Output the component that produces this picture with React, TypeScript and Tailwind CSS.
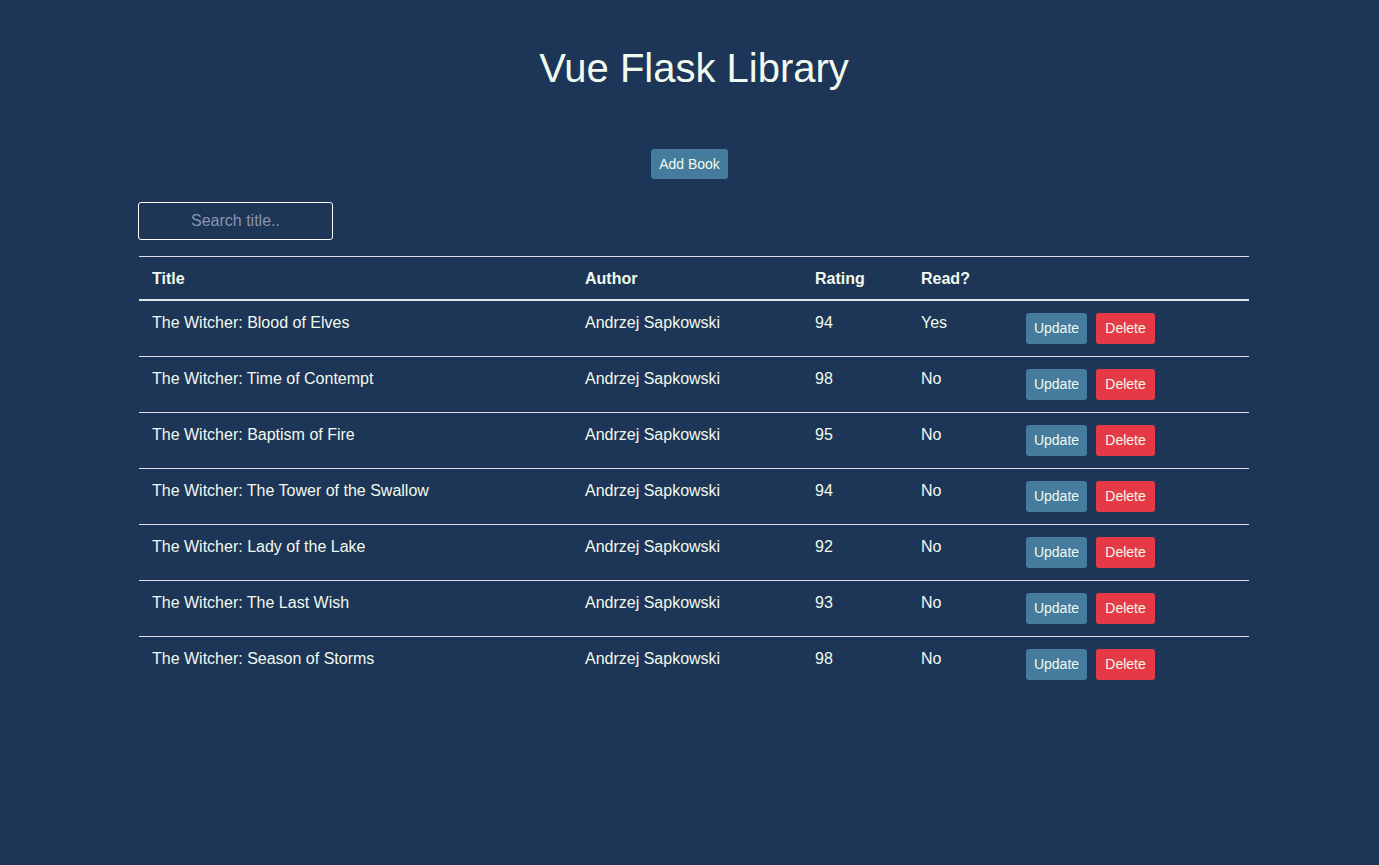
import React from "react";

interface Book {
  title: string;
  author: string;
  rating: number;
  read: boolean;
}

const books: Book[] = [
  { title: "The Witcher: Blood of Elves", author: "Andrzej Sapkowski", rating: 94, read: true },
  { title: "The Witcher: Time of Contempt", author: "Andrzej Sapkowski", rating: 98, read: false },
  { title: "The Witcher: Baptism of Fire", author: "Andrzej Sapkowski", rating: 95, read: false },
  { title: "The Witcher: The Tower of the Swallow", author: "Andrzej Sapkowski", rating: 94, read: false },
  { title: "The Witcher: Lady of the Lake", author: "Andrzej Sapkowski", rating: 92, read: false },
  { title: "The Witcher: The Last Wish", author: "Andrzej Sapkowski", rating: 93, read: false },
  { title: "The Witcher: Season of Storms", author: "Andrzej Sapkowski", rating: 98, read: false },
];

function BookRow({ book, last }: { book: Book; last: boolean }) {
  return (
    <div
      className={`flex h-[56px] text-[16px] leading-[19px] ${
        last ? "" : "border-b border-[#dee2e6]"
      }`}
    >
      <div className="w-[434px] pl-[13px] pt-[12px]">{book.title}</div>
      <div className="w-[230px] pl-[12px] pt-[12px]">{book.author}</div>
      <div className="w-[106px] pl-[12px] pt-[12px]">{book.rating}</div>
      <div className="w-[105px] pl-[12px] pt-[12px]">{book.read ? "Yes" : "No"}</div>
      <div className="flex-1 pl-[12px] pt-[12px] flex items-start gap-[9px]">
        <button className="h-[31px] w-[61px] rounded-[3px] bg-[#457b9d] text-[14px] text-[#f1faee]">
          Update
        </button>
        <button className="h-[31px] w-[59px] rounded-[3px] bg-[#e63946] text-[14px] text-[#f1faee]">
          Delete
        </button>
      </div>
    </div>
  );
}

export default function App() {
  return (
    <div
      className="min-h-screen bg-[#1d3557] text-[#f1faee]"
      style={{ fontFamily: '"Liberation Sans", Arial, sans-serif' }}
    >
      <div className="w-[1110px] ml-[139px] pt-[44px]">
        <h1 className="text-center text-[40px] leading-[48px]">Vue Flask Library</h1>
        <div className="flex justify-center mt-[57px] pr-[9px]">
          <button className="h-[30px] w-[77px] rounded-[3px] bg-[#457b9d] text-[14px] text-[#f1faee]">
            Add Book
          </button>
        </div>
        <div className="mt-[23px] -ml-[1px]">
          <input
            type="text"
            placeholder="Search title.."
            className="h-[38px] w-[195px] rounded-[3px] border border-white bg-transparent text-center text-[16px] text-[#f1faee] placeholder:text-[#8796ab] outline-none"
          />
        </div>
        <div className="mt-[16px] border-t border-[#dee2e6]">
          <div className="flex h-[44px] items-center pt-[1px] border-b-2 border-[#dee2e6] text-[16px] font-bold">
            <div className="w-[434px] pl-[13px]">Title</div>
            <div className="w-[230px] pl-[12px]">Author</div>
            <div className="w-[106px] pl-[12px]">Rating</div>
            <div className="w-[105px] pl-[12px]">Read?</div>
            <div className="flex-1"></div>
          </div>
          {books.map((b, i) => (
            <BookRow key={b.title} book={b} last={i === books.length - 1} />
          ))}
        </div>
      </div>
    </div>
  );
}
